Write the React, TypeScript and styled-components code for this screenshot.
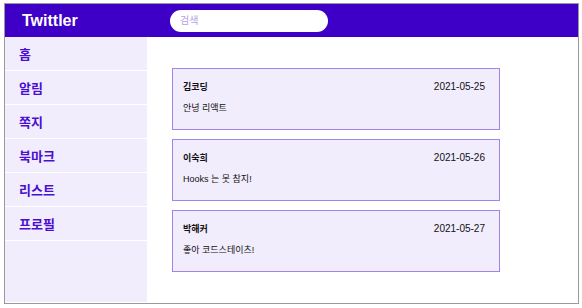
import React from 'react';
import styled, { createGlobalStyle } from 'styled-components';

const GlobalStyle = createGlobalStyle`
  * {
    box-sizing: border-box;
  }
  body {
    margin: 0;
    background-color: #ffffff;
    font-family: 'Liberation Sans', 'Noto Sans CJK KR', sans-serif;
  }
`;

interface Tweet {
  id: number;
  username: string;
  createdAt: string;
  content: string;
}

const tweets: Tweet[] = [
  { id: 1, username: '김코딩', createdAt: '2021-05-25', content: '안녕 리액트' },
  { id: 2, username: '이숙희', createdAt: '2021-05-26', content: 'Hooks 는 못 참지!' },
  { id: 3, username: '박해커', createdAt: '2021-05-27', content: '좋아 코드스테이츠!' },
];

const menus = ['홈', '알림', '쪽지', '북마크', '리스트', '프로필'];

function App() {
  return (
    <>
      <GlobalStyle />
      <Frame>
        <Header>
          <Logo>Twittler</Logo>
          <SearchInput type="text" placeholder="검색" />
        </Header>
        <Body>
          <Sidebar>
            {menus.map((menu) => (
              <NavItem key={menu}>{menu}</NavItem>
            ))}
          </Sidebar>
          <Main>
            {tweets.map((tweet) => (
              <Card key={tweet.id}>
                <CardHead>
                  <Username>{tweet.username}</Username>
                  <CreatedAt>{tweet.createdAt}</CreatedAt>
                </CardHead>
                <Content>{tweet.content}</Content>
              </Card>
            ))}
          </Main>
        </Body>
      </Frame>
    </>
  );
}

export default App;

const Frame = styled.div`
  display: flex;
  flex-direction: column;
  width: 575px;
  height: 301px;
  margin: 3px 0 0 4px;
  border: 1px solid #9a9a9a;
  background-color: #ffffff;
`;

const Header = styled.header`
  display: flex;
  align-items: center;
  height: 33px;
  padding-left: 17px;
  background-color: #3e00c6;
`;

const Logo = styled.h1`
  flex: 0 0 148px;
  margin: 0;
  color: #ffffff;
  font-size: 16px;
  font-weight: 700;
`;

const SearchInput = styled.input`
  width: 158px;
  height: 22px;
  padding: 0 10px;
  border: none;
  border-radius: 11px;
  background-color: #ffffff;
  font-family: inherit;
  font-size: 10px;
  &::placeholder {
    color: #b7a3e6;
  }
  &:focus {
    outline: none;
  }
`;

const Body = styled.div`
  display: flex;
  flex: 1;
`;

const Sidebar = styled.nav`
  display: flex;
  flex-direction: column;
  width: 142px;
  margin-bottom: 1px;
  background-color: #f1edfd;
`;

const NavItem = styled.a`
  display: flex;
  align-items: center;
  height: 34px;
  padding-left: 14px;
  border-bottom: 1px solid #ffffff;
  color: #4a0fd2;
  font-size: 13px;
  font-weight: 700;
  cursor: pointer;
`;

const Main = styled.main`
  display: flex;
  flex-direction: column;
  gap: 9px;
  flex: 1;
  padding: 31px 0 0 25px;
`;

const Card = styled.article`
  width: 328px;
  height: 62px;
  padding: 11px 14px 0 10px;
  border: 1px solid #a283ea;
  background-color: #f1edfd;
`;

const CardHead = styled.div`
  display: flex;
  justify-content: space-between;
  align-items: center;
  height: 12px;
  margin-bottom: 10px;
`;

const Username = styled.span`
  color: #111111;
  font-size: 9px;
  font-weight: 700;
`;

const CreatedAt = styled.span`
  color: #111111;
  font-size: 10px;
`;

const Content = styled.p`
  margin: 0;
  line-height: 12px;
  color: #111111;
  font-size: 9px;
`;
